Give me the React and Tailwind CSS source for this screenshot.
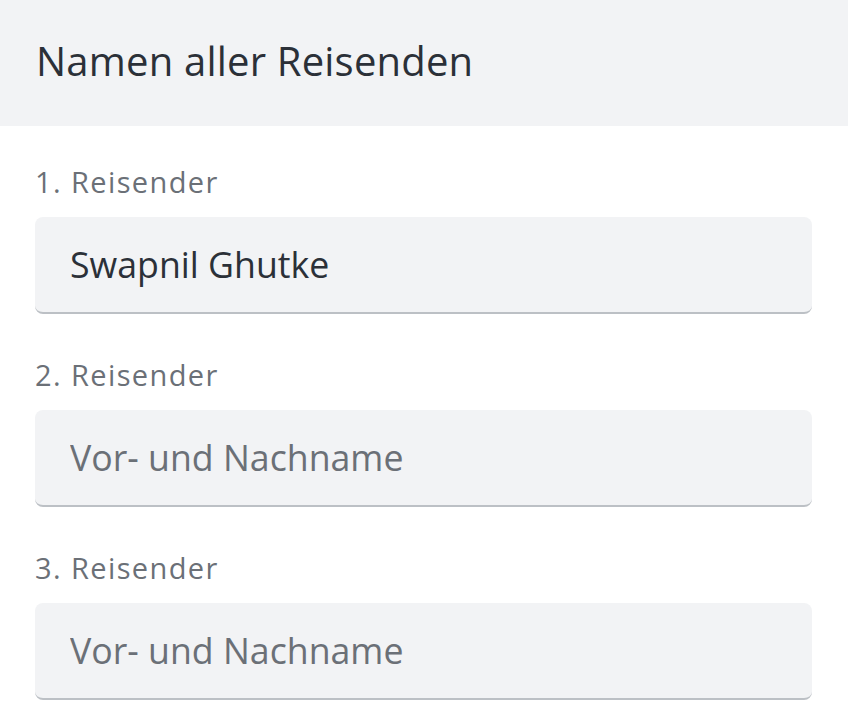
export default function App() {
  const travelers = [
    { label: "1. Reisender", value: "Swapnil Ghutke" },
    { label: "2. Reisender", value: "" },
    { label: "3. Reisender", value: "" },
  ];
  return (
    <div className="w-[848px] h-[724px] bg-white overflow-hidden" style={{ fontFamily: '"Open Sans", sans-serif' }}>
      <div className="h-[126px] bg-[#f2f3f5] flex items-center px-[36px]">
        <h1 className="text-[40px] leading-none text-[#2b3038] pb-[5px] tracking-[0.2px]">Namen aller Reisenden</h1>
      </div>
      <div className="px-[35px] pt-[38px] flex flex-col gap-[43px]">
        {travelers.map((t, i) => (
          <div key={i} className="flex flex-col">
            <label className="text-[29px] leading-[36px] tracking-[1.4px] text-[#6b7077]">{t.label}</label>
            <div className="mt-[17px] h-[97px] w-[777px] bg-[#f2f3f5] rounded-[8px] border-b-2 border-[#bcc0c5] flex items-center px-[35px]">
              <input
                readOnly
                value={t.value}
                placeholder="Vor- und Nachname"
                className="w-full bg-transparent outline-none text-[35.7px] text-[#2b3038] placeholder:text-[#6b7077]"
              />
            </div>
          </div>
        ))}
      </div>
    </div>
  );
}
